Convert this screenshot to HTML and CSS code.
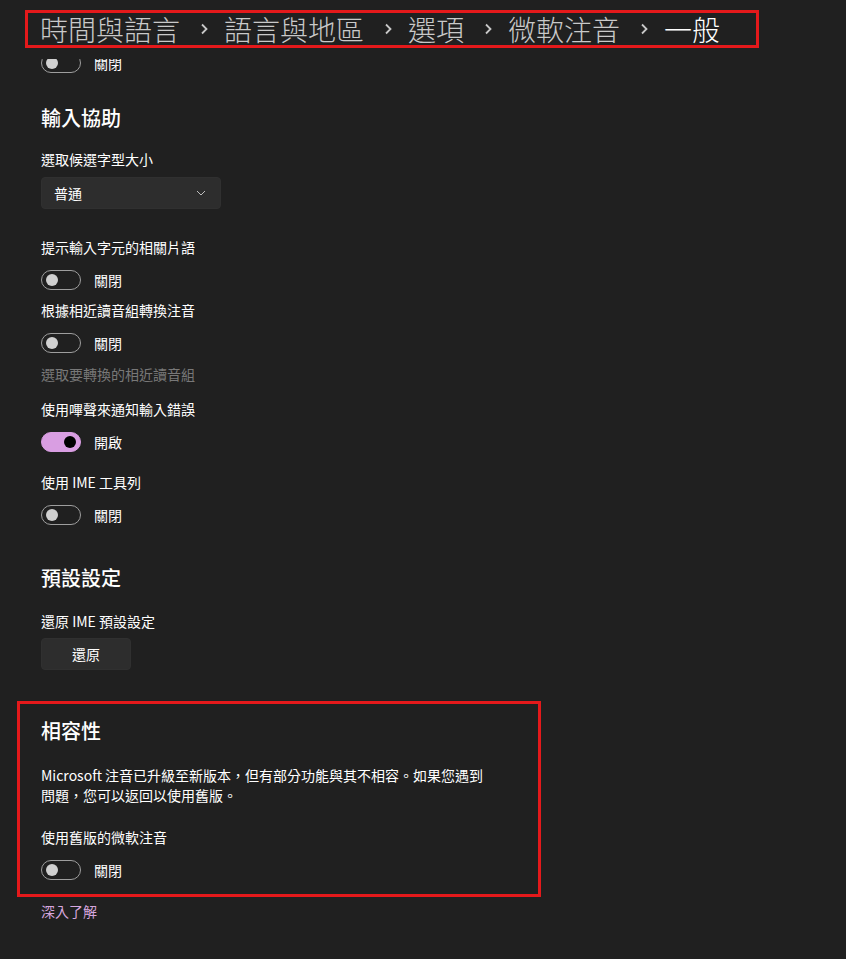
FILE: index.html
```html
<!DOCTYPE html>
<html lang="zh-Hant">
<head>
    <meta charset="UTF-8">
    <meta name="viewport" content="width=device-width, initial-scale=1.0">
    <title>一般</title>
    <link rel="stylesheet" href="styles.css">
</head>
<body>
    <div class="top">
        <div class="crumbs">
            <span class="crumb">時間與語言</span>
            <svg class="sep" width="8" height="12" viewBox="0 0 8 12"><path d="M2 1.5 L6.5 6 L2 10.5" fill="none" stroke="#c8c8c8" stroke-width="1.8"/></svg>
            <span class="crumb">語言與地區</span>
            <svg class="sep" width="8" height="12" viewBox="0 0 8 12"><path d="M2 1.5 L6.5 6 L2 10.5" fill="none" stroke="#c8c8c8" stroke-width="1.8"/></svg>
            <span class="crumb">選項</span>
            <svg class="sep" width="8" height="12" viewBox="0 0 8 12"><path d="M2 1.5 L6.5 6 L2 10.5" fill="none" stroke="#c8c8c8" stroke-width="1.8"/></svg>
            <span class="crumb">微軟注音</span>
            <svg class="sep" width="8" height="12" viewBox="0 0 8 12"><path d="M2 1.5 L6.5 6 L2 10.5" fill="none" stroke="#c8c8c8" stroke-width="1.8"/></svg>
            <span class="crumb current">一般</span>
        </div>
    </div>

    <div class="content">
        <div class="toggle-row first">
            <span class="toggle"></span>
            <span class="state">關閉</span>
        </div>

        <h2 class="title t-input">輸入協助</h2>

        <div class="label l-size">選取候選字型大小</div>
        <div class="select">
            <span>普通</span>
            <svg width="10" height="6" viewBox="0 0 10 6"><path d="M1 1 L5 5 L9 1" fill="none" stroke="#bdbdbd" stroke-width="1"/></svg>
        </div>

        <div class="label l-gap-lg">提示輸入字元的相關片語</div>
        <div class="toggle-row">
            <span class="toggle"></span>
            <span class="state">關閉</span>
        </div>

        <div class="label l-gap-sm">根據相近讀音組轉換注音</div>
        <div class="toggle-row">
            <span class="toggle"></span>
            <span class="state">關閉</span>
        </div>
        <div class="label dim">選取要轉換的相近讀音組</div>

        <div class="label l-beep">使用嗶聲來通知輸入錯誤</div>
        <div class="toggle-row">
            <span class="toggle on"></span>
            <span class="state">開啟</span>
        </div>

        <div class="label l-gap-md">使用 IME 工具列</div>
        <div class="toggle-row">
            <span class="toggle"></span>
            <span class="state">關閉</span>
        </div>

        <h2 class="title t-default">預設設定</h2>
        <div class="label l-reset">還原 IME 預設設定</div>
        <button class="btn">還原</button>

        <div class="compat">
            <h2 class="title">相容性</h2>
            <p class="desc">Microsoft 注音已升級至新版本，但有部分功能與其不相容。如果您遇到<br>問題，您可以返回以使用舊版。</p>
            <div class="label l-legacy">使用舊版的微軟注音</div>
            <div class="toggle-row">
                <span class="toggle"></span>
                <span class="state">關閉</span>
            </div>
        </div>
        <a class="more" href="#">深入了解</a>
    </div>
</body>
</html>
```

FILE: styles.css
```css
* {
    box-sizing: border-box;
}
body {
    margin: 0;
    background: #202020;
    color: #fff;
    font-family: "Noto Sans CJK TC", "Noto Sans", sans-serif;
    font-size: 14px;
    line-height: 20px;
}
.top {
    height: 59px;
    padding: 10px 0 0 25px;
    position: relative;
    z-index: 1;
    background: #202020;
}
.crumbs {
    width: 734px;
    height: 38px;
    border: 3px solid #e4191b;
    padding-left: 12px;
    display: flex;
    align-items: center;
    font-size: 28px;
    line-height: 32px;
    font-weight: 300;
    color: #c9c9c9;
}
.sep {
    margin: 0 16px 0 20px;
}
.crumb.current {
    color: #fff;
}
.content {
    padding-left: 41px;
}
.toggle-row {
    display: flex;
    align-items: center;
    height: 20px;
    margin-top: 13px;
}
.toggle-row.first {
    margin-top: -6px;
}
.toggle {
    width: 40px;
    height: 20px;
    border: 1px solid #9e9e9e;
    border-radius: 10px;
    display: flex;
    align-items: center;
    padding: 0 4px;
}
.toggle::before {
    content: "";
    width: 12px;
    height: 12px;
    border-radius: 50%;
    background: #d0d0d0;
}
.toggle.on {
    background: #d99ee2;
    border-color: #d99ee2;
    justify-content: flex-end;
}
.toggle.on::before {
    background: #000;
}
.state {
    margin-left: 13px;
}
.title {
    margin: 0;
    font-size: 20px;
    line-height: 28px;
    font-weight: 500;
}
.t-input {
    margin-top: 31px;
}
.t-default {
    margin-top: 39px;
}
.label {
    margin-top: 10px;
}
.l-size {
    margin-top: 17px;
}
.l-gap-lg {
    margin-top: 28px;
}
.l-gap-sm {
    margin-top: 10px;
}
.l-gap-md {
    margin-top: 20px;
}
.l-beep {
    margin-top: 15px;
}
.l-reset {
    margin-top: 19px;
}
.label.dim {
    margin-top: 11px;
    color: #787878;
}
.select {
    margin-top: 8px;
    width: 180px;
    height: 32px;
    background: #2d2d2d;
    border: 1px solid #303030;
    border-radius: 4px;
    display: flex;
    align-items: center;
    justify-content: space-between;
    padding: 0 14px 0 12px;
}
.btn {
    display: block;
    margin-top: 7px;
    width: 90px;
    height: 32px;
    background: #2d2d2d;
    border: 1px solid #303030;
    border-radius: 4px;
    color: #fff;
    font: inherit;
}
.compat {
    margin: 31px 0 0 -24px;
    width: 524px;
    border: 3px solid #e4191b;
    padding: 13px 21px 14px;
}
.desc {
    margin: 20px 0 0;
}
.l-legacy {
    margin-top: 22px;
}
.more {
    display: inline-block;
    margin-top: 4px;
    color: #d6a6de;
    text-decoration: none;
}
```
